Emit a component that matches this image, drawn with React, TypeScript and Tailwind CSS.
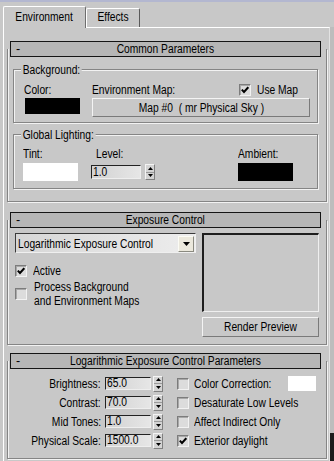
import React from "react";

function T({ children, o }: { children: React.ReactNode; o?: string }) {
  return (
    <span className={`inline-block whitespace-pre scale-x-[0.82] ${o ?? "origin-left"}`}>
      {children}
    </span>
  );
}

function Check({ checked }: { checked?: boolean }) {
  return (
    <div className="w-[12px] h-[12px] shrink-0 border border-t-[#7c7c7c] border-l-[#7c7c7c] border-r-[#f2f2f2] border-b-[#f2f2f2] bg-[#dcdcdc] shadow-[inset_1px_1px_0_#a8a8a8] flex items-center justify-center">
      {checked && (
        <svg width="8" height="8" viewBox="0 0 8 8">
          <path d="M0.8 3.6 L3 6 L7.3 1.2" stroke="#000" strokeWidth="2" fill="none" />
        </svg>
      )}
    </div>
  );
}

function Spin() {
  return (
    <div className="w-[10px] h-[16px] shrink-0 flex flex-col border border-t-[#f4f4f4] border-l-[#f4f4f4] border-r-[#808080] border-b-[#808080] bg-[#d4d4d4]">
      <div className="flex-1 flex items-center justify-center border-b border-[#9a9a9a]">
        <svg width="5" height="3" viewBox="0 0 5 3">
          <path d="M2.5 0 L5 3 L0 3 Z" fill="#000" />
        </svg>
      </div>
      <div className="flex-1 flex items-center justify-center">
        <svg width="5" height="3" viewBox="0 0 5 3">
          <path d="M0 0 L5 0 L2.5 3 Z" fill="#000" />
        </svg>
      </div>
    </div>
  );
}

function Field({ value, className }: { value: string; className: string }) {
  return (
    <div
      className={`${className} shrink-0 border border-t-[#222] border-l-[#222] border-r-[#eeeeee] border-b-[#eeeeee] bg-gradient-to-r from-[#d2d2d2] to-[#e6e6e6] pl-[1px] flex items-center leading-[11px] overflow-hidden`}
    >
      <T>{value}</T>
    </div>
  );
}

function Header({ title }: { title: string }) {
  return (
    <div className="relative z-10 ml-[3px] w-[311px] h-[16px] border border-[#151515] bg-[#b6b6b6] grid grid-cols-[1fr_auto_1fr] items-center leading-[14px]">
      <span className="pl-[5px]">-</span>
      <T o="origin-center">{title}</T>
      <span />
    </div>
  );
}

function Rollout({
  title,
  className,
  children,
}: {
  title: string;
  className: string;
  children: React.ReactNode;
}) {
  return (
    <div className={`w-[320px] ${className}`}>
      <Header title={title} />
      <div className="-mt-[8px] border border-t-0 border-[#858585] shadow-[1px_1px_0_#f2f2f2,inset_1px_0_0_#f2f2f2]">
        {children}
      </div>
    </div>
  );
}

function Group({
  label,
  className,
  children,
}: {
  label: string;
  className: string;
  children: React.ReactNode;
}) {
  return (
    <div
      className={`relative ml-[5px] mr-[8px] border border-[#858585] shadow-[1px_1px_0_#f2f2f2,inset_1px_1px_0_#f2f2f2] ${className}`}
    >
      <span className="absolute -top-[7px] left-[7px] leading-[14px]">
        <span className="inline-block whitespace-nowrap scale-x-[0.82] origin-left px-[2px] bg-[#c8c8c8]">
          {label}
        </span>
      </span>
      {children}
    </div>
  );
}

function Button({ children, className }: { children: React.ReactNode; className: string }) {
  return (
    <div
      className={`${className} border border-t-[#f4f4f4] border-l-[#f4f4f4] border-r-[#7a7a7a] border-b-[#7a7a7a] bg-[#c8c8c8] flex items-center justify-center`}
    >
      <T o="origin-center">{children}</T>
    </div>
  );
}

export default function App() {
  const rows = [
    ["Brightness:", "65.0"],
    ["Contrast:", "70.0"],
    ["Mid Tones:", "1.0"],
    ["Physical Scale:", "1500.0"],
  ];
  const checks: [string, boolean][] = [
    ["Color Correction:", false],
    ["Desaturate Low Levels", false],
    ["Affect Indirect Only", false],
    ["Exterior daylight", true],
  ];
  return (
    <div className="relative w-[334px] h-[461px] overflow-hidden bg-[#c8c8c8] text-black text-[12.5px] leading-[14px] font-['Liberation_Sans',Arial,sans-serif]">
      <div className="h-[2px] bg-[#b3b7d0]" />
      {/* Tabs */}
      <div className="relative z-10 flex items-end h-[25px] pl-[3px]">
        <div className="h-[22px] -mb-px w-[83px] bg-[#c8c8c8] border-l border-t border-white border-r border-r-[#6e6e6e] rounded-t-[2px] flex justify-center pt-[3px]">
          <T o="origin-center">Environment</T>
        </div>
        <div className="h-[19px] w-[54px] border-l border-t border-white border-r border-r-[#5a5a5a] rounded-t-[2px] flex justify-center pt-[1px]">
          <T o="origin-center">Effects</T>
        </div>
      </div>
      <div className="flex h-[434px]">
        {/* Panel */}
        <div className="ml-[3px] w-[327px] h-full border-l border-t border-white border-r border-r-[#e2e2e2] pl-[3px] pt-[13px] overflow-hidden">
          {/* Common Parameters */}
          <Rollout title="Common Parameters" className="">
            <div className="pt-[20px] pb-[12px]">
              <Group label="Background:" className="h-[54px] pt-[13px] pl-[10px] flex">
                <div className="w-[68px]">
                  <div className="h-[14px]">
                    <T>Color:</T>
                  </div>
                  <div className="mt-[1px] ml-[1px] w-[55px] h-[16px] bg-black" />
                </div>
                <div className="w-[218px]">
                  <div className="h-[14px] flex items-center">
                    <span className="w-[147px]">
                      <T>Environment Map:</T>
                    </span>
                    <Check checked />
                    <span className="ml-[6px]">
                      <T>Use Map</T>
                    </span>
                  </div>
                  <Button className="mt-[1px] h-[19px] w-full">{"Map #0  ( mr Physical Sky )"}</Button>
                </div>
              </Group>
              <Group label="Global Lighting:" className="mt-[11px] h-[55px] pt-[12px] pl-[9px] flex">
                <div className="w-[68px]">
                  <div className="h-[14px]">
                    <T>Tint:</T>
                  </div>
                  <div className="mt-[2px] w-[55px] h-[18px] bg-white" />
                </div>
                <div className="w-[147px]">
                  <div className="h-[14px] pl-[5px]">
                    <T>Level:</T>
                  </div>
                  <div className="mt-[2px] h-[18px] flex items-center">
                    <Field value="1.0" className="w-[50px] h-[14px]" />
                    <div className="ml-[4px]">
                      <Spin />
                    </div>
                  </div>
                </div>
                <div>
                  <div className="h-[14px]">
                    <T>Ambient:</T>
                  </div>
                  <div className="mt-[2px] w-[55px] h-[18px] bg-black" />
                </div>
              </Group>
            </div>
          </Rollout>

          {/* Exposure Control */}
          <Rollout title="Exposure Control" className="mt-[10px]">
            <div className="flex pt-[13px] pl-[7px] pb-[7px]">
              <div className="w-[181px]">
                <div className="h-[20px] border border-t-[#3a3a3a] border-l-[#3a3a3a] border-r-[#efefef] border-b-[#efefef] bg-gradient-to-r from-[#d6d6d6] via-[#e2e2e2] to-[#ededed] flex items-center">
                  <div className="flex-1 min-w-0 pl-[2px] pt-[2px]">
                    <T>Logarithmic Exposure Control</T>
                  </div>
                  <div className="shrink-0 mr-[1px] mt-[1px] w-[16px] h-[16px] border border-t-[#fbfbf4] border-l-[#fbfbf4] border-r-[#8a8a80] border-b-[#8a8a80] bg-[#ebe8dc] flex items-center justify-center">
                    <svg width="7" height="4" viewBox="0 0 7 4">
                      <path d="M0 0 L7 0 L3.5 4 Z" fill="#000" />
                    </svg>
                  </div>
                </div>
                <div className="mt-[12px] h-[12px] flex items-center">
                  <Check checked />
                  <span className="ml-[6px]">
                    <T>Active</T>
                  </span>
                </div>
                <div className="mt-[3px] flex items-center">
                  <Check />
                  <span className="ml-[7px] leading-[14px]">
                    <T>
                      Process Background
                      <br />
                      and Environment Maps
                    </T>
                  </span>
                </div>
              </div>
              <div className="ml-[6px] w-[117px]">
                <div className="h-[79px] border-t-2 border-l-2 border-t-[#1e1e1e] border-l-[#1e1e1e] border-r border-b border-r-[#efefef] border-b-[#efefef] bg-[#c8c8c8]" />
                <Button className="mt-[5px] h-[20px] w-full">Render Preview</Button>
              </div>
            </div>
          </Rollout>

          {/* Logarithmic Exposure Control Parameters */}
          <Rollout title="Logarithmic Exposure Control Parameters" className="mt-[8px]">
            <div className="flex pt-[13px] pb-[8px]">
              <div className="flex flex-col">
                {rows.map(([label, val]) => (
                  <div key={label} className="h-[19px] flex items-center">
                    <span className="w-[93px] text-right">
                      <T o="origin-right">{label}</T>
                    </span>
                    <Field value={val} className="ml-[4px] w-[46px] h-[13px]" />
                    <div className="ml-[2px]">
                      <Spin />
                    </div>
                  </div>
                ))}
              </div>
              <div className="ml-[14px] w-[139px] flex flex-col">
                {checks.map(([label, on]) => (
                  <div key={label} className="h-[19px] flex items-center">
                    <Check checked={on} />
                    <span className="ml-[5px]">
                      <T>{label}</T>
                    </span>
                    {label === "Color Correction:" && (
                      <div className="ml-auto w-[38px] h-[15px] bg-white" />
                    )}
                  </div>
                ))}
              </div>
            </div>
          </Rollout>
        </div>
        {/* right scroll strip */}
        <div className="w-[4px] h-full flex flex-col bg-[#bdbdbd]">
          <div className="flex-1" />
          <div className="h-[28px] bg-[#1c1c1c]" />
        </div>
      </div>
    </div>
  );
}
